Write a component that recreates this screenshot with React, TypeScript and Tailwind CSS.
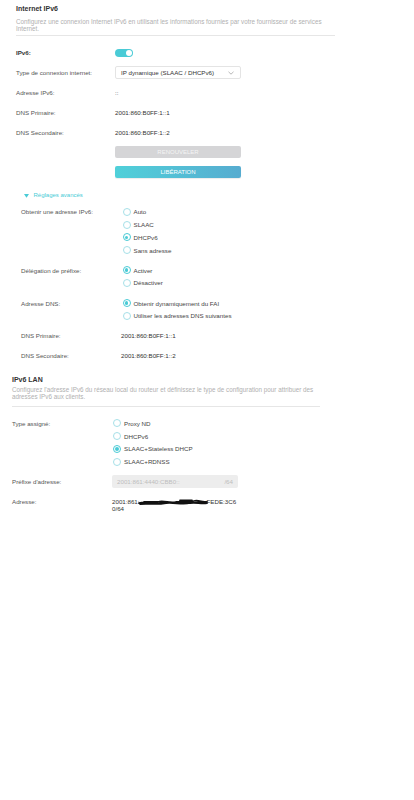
import React from "react";

const font = { fontFamily: '"Liberation Sans", Arial, sans-serif' };

function Radio({ checked }: { checked?: boolean }) {
  return checked ? (
    <span className="w-[8px] h-[8px] rounded-full border border-[#4acbd6] flex items-center justify-center shrink-0">
      <span className="w-[3.5px] h-[3.5px] rounded-full bg-[#4acbd6]" />
    </span>
  ) : (
    <span className="w-[8px] h-[8px] rounded-full border border-[#a6e0e8] shrink-0" />
  );
}

function RadioGroup({ items, checked }: { items: string[]; checked: number }) {
  return (
    <div className="flex flex-col">
      {items.map((t, i) => (
        <div key={t} className="h-[12.8px] flex items-center gap-[3px] ml-[1.5px]">
          <Radio checked={i === checked} />
          <span className="text-[#444]">{t}</span>
        </div>
      ))}
    </div>
  );
}

function Row({ label, value, labelW, bold }: { label: string; value: React.ReactNode; labelW: string; bold?: boolean }) {
  return (
    <div className="h-[20px] flex items-center">
      <div className={`${labelW} shrink-0 ${bold ? "font-bold text-[#333]" : "text-[#555]"}`}>{label}</div>
      <div className="text-[#333]">{value}</div>
    </div>
  );
}

export default function App() {
  return (
    <div className="w-[414px] h-[800px] bg-white text-[6.2px] leading-[7px]" style={font}>
      {/* Internet IPv6 */}
      <div className="ml-[16px] w-[319px] pt-[4px]">
        <div className="h-[10px] leading-[10px] text-[7px] font-bold text-[#333]">Internet IPv6</div>
        <div className="mt-[5px] text-[6.3px] leading-[6.7px] text-[#b0b0b0] whitespace-nowrap">
          Configurez une connexion Internet IPv6 en utilisant les informations fournies par votre fournisseur de services
          <br />
          Internet.
        </div>
        <div className="mt-[3px] h-px bg-[#e6e6e6]" />
        <div className="mt-[6.3px]">
          <Row
            label="IPv6:"
            bold
            labelW="w-[99px]"
            value={
              <span className="w-[18px] h-[8px] rounded-full bg-[#4acbd6] flex items-center justify-end pr-[1px]">
                <span className="w-[6px] h-[6px] rounded-full bg-white" />
              </span>
            }
          />
          <div className="h-[20px] flex items-center">
            <div className="w-[99px] shrink-0 text-[#555]">Type de connexion internet:</div>
            <div className="w-[126px] h-[13px] border border-[#e4e4e4] rounded-[2px] flex items-center justify-between pl-[5px] pr-[6px] text-[#333]">
              <span>IP dynamique (SLAAC / DHCPv6)</span>
              <svg width="6" height="4" viewBox="0 0 6 4" fill="none">
                <path d="M0.5 0.8 L3 3.2 L5.5 0.8" stroke="#999" strokeWidth="0.7" />
              </svg>
            </div>
          </div>
          <Row label="Adresse IPv6:" labelW="w-[99px]" value="::" />
          <Row label="DNS Primaire:" labelW="w-[99px]" value="2001:860:B0FF:1::1" />
          <Row label="DNS Secondaire:" labelW="w-[99px]" value="2001:860:B0FF:1::2" />
        </div>
        <div className="ml-[99px] mt-[3.7px] flex flex-col gap-[8px]">
          <div className="w-[126px] h-[12px] rounded-[2px] bg-[#d5d5d7] flex items-center justify-center text-[6px] text-[#f4f4f4]">
            RENOUVELER
          </div>
          <div className="w-[126px] h-[12px] rounded-[2px] bg-gradient-to-r from-[#4fd0d9] to-[#56acd0] shadow-[0_1px_1px_rgba(0,0,0,0.08)] flex items-center justify-center text-[6px] text-white">
            LIBÉRATION
          </div>
        </div>
        <div className="mt-[14px] ml-[8px] flex items-center gap-[4.5px] text-[6px] text-[#4acbd6]">
          <svg width="5" height="4" viewBox="0 0 5 4">
            <path d="M0 0 L5 0 L2.5 3.8 Z" fill="#4acbd6" />
          </svg>
          <span>Réglages avancés</span>
        </div>
      </div>

      {/* Advanced */}
      <div className="ml-[21px] mt-[6px]">
        <div className="flex">
          <div className="w-[100px] shrink-0 h-[12.8px] flex items-center text-[#555]">Obtenir une adresse IPv6:</div>
          <RadioGroup items={["Auto", "SLAAC", "DHCPv6", "Sans adresse"]} checked={2} />
        </div>
        <div className="flex mt-[7.1px]">
          <div className="w-[100px] shrink-0 h-[12.8px] flex items-center text-[#555]">Délégation de préfixe:</div>
          <RadioGroup items={["Activer", "Désactiver"]} checked={0} />
        </div>
        <div className="flex mt-[7.4px]">
          <div className="w-[100px] shrink-0 h-[12.8px] flex items-center text-[#555]">Adresse DNS:</div>
          <RadioGroup items={["Obtenir dynamiquement du FAI", "Utiliser les adresses DNS suivantes"]} checked={0} />
        </div>
        <div className="mt-[2.8px]">
          <Row label="DNS Primaire:" labelW="w-[100px]" value="2001:860:B0FF:1::1" />
          <Row label="DNS Secondaire:" labelW="w-[100px]" value="2001:860:B0FF:1::2" />
        </div>
      </div>

      {/* IPv6 LAN */}
      <div className="ml-[12px] w-[308px] mt-[9.7px]">
        <div className="h-[10px] leading-[10px] text-[7px] font-bold text-[#333]">IPv6 LAN</div>
        <div className="mt-[2.6px] text-[6.3px] leading-[6.7px] text-[#b0b0b0] whitespace-nowrap">
          Configurez l'adresse IPv6 du réseau local du routeur et définissez le type de configuration pour attribuer des
          <br />
          adresses IPv6 aux clients.
        </div>
        <div className="mt-[5.5px] h-px bg-[#e6e6e6]" />
        <div className="flex mt-[9.6px]">
          <div className="w-[100px] shrink-0 h-[12.8px] flex items-center text-[#555]">Type assigné:</div>
          <div className="-ml-[0.5px]">
            <RadioGroup items={["Proxy ND", "DHCPv6", "SLAAC+Stateless DHCP", "SLAAC+RDNSS"]} checked={2} />
          </div>
        </div>
        <div className="flex items-center mt-[6.8px]">
          <div className="w-[100px] shrink-0 text-[#555]">Préfixe d'adresse:</div>
          <div className="w-[126px] h-[12.7px] rounded-[2px] bg-[#ededed] flex items-center justify-between pl-[5px] pr-[5px] text-[#bdbdbd]">
            <span>2001:861:4440:CBB0::</span>
            <span>/64</span>
          </div>
        </div>
        <div className="flex mt-[11.3px] leading-[6.7px]">
          <div className="w-[100px] shrink-0 text-[#555]">Adresse:</div>
          <div className="text-[#333]">
            <div className="flex items-center">
              <span>2001:861:</span>
              <svg width="70" height="7" viewBox="0 0 70 7" className="-ml-[2px]">
                <path
                  d="M1 4 C8 2 14 5 20 3 C26 1 32 5 38 3 C44 2 50 4 56 2 C60 1 64 3 69 3 M2 5 C10 4 18 6 28 4 C36 3 44 6 52 4 C58 3 63 5 69 4 M6 3 C14 3 22 2 30 3 M42 1.5 L54 1.5"
                  stroke="#111"
                  strokeWidth="1.8"
                  fill="none"
                  strokeLinecap="round"
                />
              </svg>
              <span className="-ml-[1px]">FEDE:3C6</span>
            </div>
            <div>0/64</div>
          </div>
        </div>
      </div>
    </div>
  );
}
